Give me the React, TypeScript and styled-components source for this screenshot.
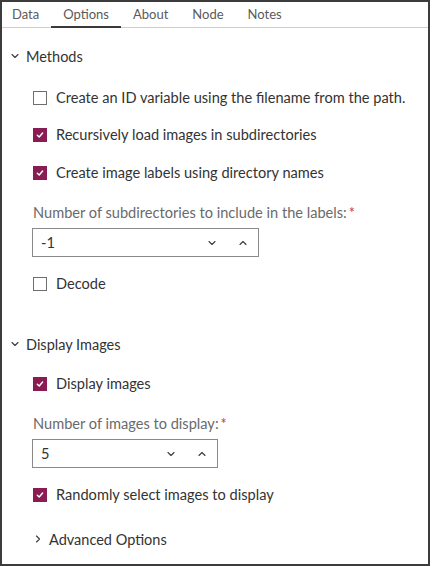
import React from "react";
import styled, { createGlobalStyle } from "styled-components";

const GlobalStyle = createGlobalStyle`
  html, body {
    margin: 0;
    padding: 0;
    background: #ffffff;
  }
  body {
    font-family: "Lato", "Open Sans", sans-serif;
    color: #323232;
  }
`;

const Frame = styled.div`
  box-sizing: border-box;
  width: 430px;
  height: 566px;
  border: 2px solid #3c3c3c;
  background: #fff;
  display: flex;
  flex-direction: column;
  overflow: hidden;
`;

const TabBar = styled.div`
  display: flex;
  height: 25px;
  border-bottom: 1px solid #cfcfcf;
`;

const Tab = styled.div<{ $active?: boolean }>`
  display: flex;
  align-items: center;
  padding: 0 12px 1px;
  font-size: 13px;
  color: #5a5a5a;
  border-bottom: 2px solid ${(p) => (p.$active ? "#3a3a3a" : "transparent")};
  margin-bottom: -1px;
  &:first-child {
    padding-left: 10px;
  }
`;

const Body = styled.div`
  display: flex;
  flex-direction: column;
`;

const SectionHeader = styled.div<{ $top: number; $indent?: number }>`
  display: flex;
  align-items: center;
  gap: 6px;
  height: 22px;
  margin-top: ${(p) => p.$top}px;
  padding-left: ${(p) => p.$indent ?? 8}px;
  font-size: 14.5px;
  color: #333333;
`;

const SectionBody = styled.div`
  display: flex;
  flex-direction: column;
  padding-left: 31px;
`;

const CheckRow = styled.label<{ $top: number }>`
  display: flex;
  align-items: center;
  gap: 9px;
  height: 37px;
  margin-top: ${(p) => p.$top}px;
  font-size: 14.6px;
  color: #333333;
`;

const Box = styled.span<{ $checked?: boolean }>`
  box-sizing: border-box;
  width: 14px;
  height: 14px;
  flex: none;
  display: flex;
  align-items: center;
  justify-content: center;
  border: 1px solid ${(p) => (p.$checked ? "#8a1c54" : "#6e6e6e")};
  background: ${(p) => (p.$checked ? "#8a1c54" : "#fff")};
`;

const FieldLabel = styled.div<{ $top: number }>`
  height: 20px;
  line-height: 20px;
  margin-top: ${(p) => p.$top}px;
  font-size: 14.6px;
  color: #6a6a6a;
`;

const Required = styled.span`
  color: #d1372b;
  margin-left: 2px;
`;

const NumberBox = styled.div<{ $width: number; $top: number }>`
  box-sizing: border-box;
  display: flex;
  align-items: center;
  width: ${(p) => p.$width}px;
  height: 29px;
  margin-top: ${(p) => p.$top}px;
  margin-left: -1px;
  border: 1px solid #8a8a8a;
  font-size: 14.6px;
  color: #333333;
`;

const NumberValue = styled.span`
  flex: 1;
  padding-left: 8px;
`;

const StepButton = styled.span`
  width: 31px;
  height: 100%;
  display: flex;
  align-items: center;
  justify-content: center;
`;

const Chevron = ({ dir, size = 10 }: { dir: "down" | "up" | "right"; size?: number }) => {
  const d =
    dir === "down"
      ? "M2 3.5 L5 6.5 L8 3.5"
      : dir === "up"
      ? "M2 6.5 L5 3.5 L8 6.5"
      : "M3.5 2 L6.5 5 L3.5 8";
  return (
    <svg width={size} height={size} viewBox="0 0 10 10" fill="none">
      <path d={d} stroke="#3a3a3a" strokeWidth="1.1" strokeLinecap="round" strokeLinejoin="round" />
    </svg>
  );
};

const Check = () => (
  <svg width="10" height="10" viewBox="0 0 10 10" fill="none">
    <path d="M2.3 5.2 L4.2 7 L7.6 3" stroke="#fff" strokeWidth="1.4" strokeLinecap="round" strokeLinejoin="round" />
  </svg>
);

const CheckItem = ({ checked, top, children }: { checked?: boolean; top: number; children: React.ReactNode }) => (
  <CheckRow $top={top}>
    <Box $checked={checked}>{checked && <Check />}</Box>
    <span>{children}</span>
  </CheckRow>
);

const Stepper = ({ value, width, top }: { value: string; width: number; top: number }) => (
  <NumberBox $width={width} $top={top}>
    <NumberValue>{value}</NumberValue>
    <StepButton>
      <Chevron dir="down" />
    </StepButton>
    <StepButton>
      <Chevron dir="up" />
    </StepButton>
  </NumberBox>
);

export default function App() {
  const tabs = ["Data", "Options", "About", "Node", "Notes"];
  return (
    <>
      <GlobalStyle />
      <Frame>
        <TabBar>
          {tabs.map((t) => (
            <Tab key={t} $active={t === "Options"}>
              {t}
            </Tab>
          ))}
        </TabBar>
        <Body>
          <SectionHeader $top={17}>
            <Chevron dir="down" />
            Methods
          </SectionHeader>
          <SectionBody>
            <CheckItem top={12}>Create an ID variable using the filename from the path.</CheckItem>
            <CheckItem top={0} checked>
              Recursively load images in subdirectories
            </CheckItem>
            <CheckItem top={1} checked>
              Create image labels using directory names
            </CheckItem>
            <FieldLabel $top={12}>
              Number of subdirectories to include in the labels:<Required>*</Required>
            </FieldLabel>
            <Stepper value="-1" width={227} top={5} />
            <CheckItem top={8}>Decode</CheckItem>
          </SectionBody>
          <SectionHeader $top={31}>
            <Chevron dir="down" />
            Display Images
          </SectionHeader>
          <SectionBody>
            <CheckItem top={10} checked>
              Display images
            </CheckItem>
            <FieldLabel $top={12}>
              Number of images to display:<Required>*</Required>
            </FieldLabel>
            <Stepper value="5" width={186} top={5} />
            <CheckItem top={8} checked>
              Randomly select images to display
            </CheckItem>
          </SectionBody>
          <SectionHeader $top={15} $indent={31}>
            <Chevron dir="right" />
            Advanced Options
          </SectionHeader>
        </Body>
      </Frame>
    </>
  );
}
